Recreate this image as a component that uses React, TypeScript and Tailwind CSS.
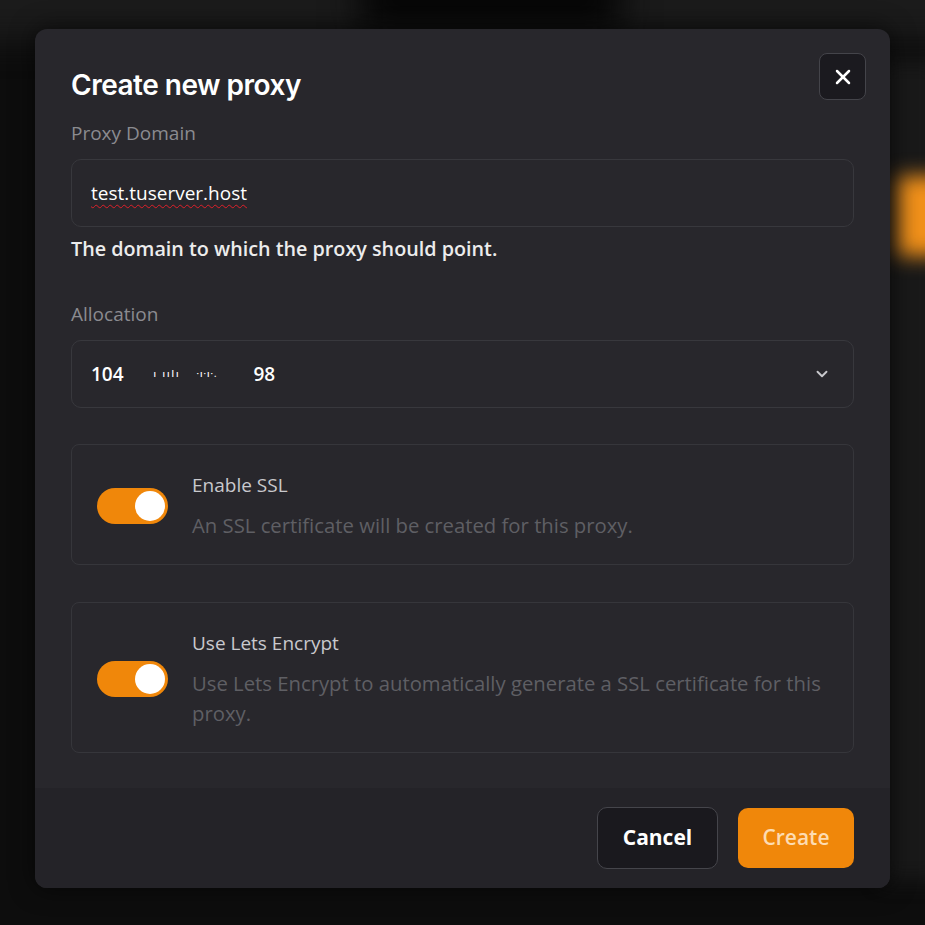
import { X, ChevronDown } from 'lucide-react';

function Toggle() {
  return (
    <div className="w-[71px] h-[36px] shrink-0 rounded-full bg-[#f0870a] flex items-center justify-end px-[3px]">
      <div className="w-[30px] h-[30px] rounded-full bg-white" />
    </div>
  );
}

function OptionCard({ title, desc }: { title: string; desc: string }) {
  return (
    <div className="flex items-center gap-[24px] rounded-[8px] border border-[#36363b] pl-[25px] pr-[20px] pt-[27px] pb-[24px]">
      <Toggle />
      <div className="flex flex-col gap-[12px] max-w-[650px]">
        <div className="text-[19px] leading-[26px] text-[#c9c9cd]">{title}</div>
        <div className="text-[20.3px] leading-[30px] text-[#5f5f64]">{desc}</div>
      </div>
    </div>
  );
}

export default function App() {
  return (
    <div className="relative w-[925px] h-[925px] overflow-hidden bg-[#0d0d0d] font-['Open_Sans',sans-serif]">
      {/* blurred page behind the dialog */}
      <div className="absolute left-[-40px] top-[-40px] w-[1000px] h-[80px] bg-[#1b1b1b] blur-[16px]" />
      <div className="absolute left-[360px] top-[-30px] w-[260px] h-[60px] bg-[#050505] blur-[18px]" />
      <div className="absolute left-[880px] top-[60px] w-[60px] h-[820px] bg-[#191919] blur-[10px]" />
      <div className="absolute left-[897px] top-[176px] w-[60px] h-[80px] bg-[#f0901a] blur-[10px]" />

      <div className="absolute left-[35px] top-[29px] w-[855px] h-[859px] flex flex-col rounded-[12px] bg-[#28272c] shadow-[0_0_24px_rgba(0,0,0,0.6)] overflow-hidden">
        <div className="flex-1 flex flex-col px-[36px] pt-[24px]">
          <div className="flex items-start justify-between">
            <h2 className="mt-[14px] font-['Inter',sans-serif] text-[28px] leading-[36px] font-semibold tracking-[-0.5px] text-white">
              Create new proxy
            </h2>
            <button className="w-[47px] h-[47px] -mr-[12px] flex items-center justify-center rounded-[8px] bg-[#1b1a1f] border border-[#44444a] text-white">
              <X className="w-[24px] h-[24px]" strokeWidth={2.5} />
            </button>
          </div>

          <label className="mt-[17px] text-[19px] leading-[26px] text-[#8b8b90]">Proxy Domain</label>
          <div className="mt-[13px] h-[68px] flex items-center rounded-[10px] border border-[#38383d] px-[19px]">
            <span className="text-[19px] text-white underline decoration-wavy decoration-[#e0202a] decoration-1 underline-offset-[4px]">
              test.tuserver.host
            </span>
          </div>
          <p className="mt-[8px] text-[19.75px] leading-[28px] font-semibold text-[#ececec]">
            The domain to which the proxy should point.
          </p>

          <label className="mt-[38px] text-[19px] leading-[26px] text-[#8b8b90]">Allocation</label>
          <div className="mt-[13px] h-[68px] flex items-center justify-between rounded-[10px] border border-[#38383d] pl-[19px] pr-[22px]">
            <div className="flex items-center text-[19px] font-semibold text-white">
              <span>104</span>
              <span className="ml-[30px] text-[9px] tracking-[2px]">ı ıılı</span>
              <span className="ml-[16px] text-[9px] tracking-[1px]">·ı·ı·.</span>
              <span className="ml-[36px]">98</span>
            </div>
            <ChevronDown className="w-[18px] h-[18px] text-[#c8c8cc]" strokeWidth={2.5} />
          </div>

          <div className="mt-[36px] flex flex-col gap-[37px]">
            <OptionCard title="Enable SSL" desc="An SSL certificate will be created for this proxy." />
            <OptionCard
              title="Use Lets Encrypt"
              desc="Use Lets Encrypt to automatically generate a SSL certificate for this proxy."
            />
          </div>
        </div>

        <div className="h-[100px] flex items-center justify-end gap-[20px] bg-[#242328] px-[36px]">
          <button className="w-[121px] h-[62px] rounded-[10px] border border-[#45454b] bg-[#1a191e] text-[21px] font-bold text-white">
            Cancel
          </button>
          <button className="w-[116px] h-[60px] rounded-[10px] bg-[#f0870a] text-[21px] font-semibold text-[#fddcb3]">
            Create
          </button>
        </div>
      </div>
    </div>
  );
}
